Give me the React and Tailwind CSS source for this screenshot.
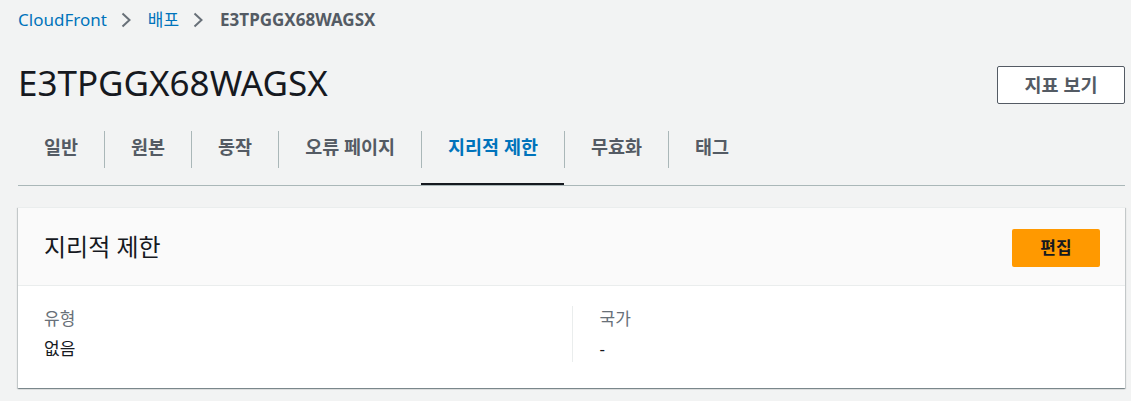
import React from 'react';

const tabs = ['일반', '원본', '동작', '오류 페이지', '지리적 제한', '무효화', '태그'];
const activeTab = '지리적 제한';

function Chevron() {
  return (
    <svg width="16" height="16" viewBox="0 0 16 16" className="ml-[12px] mr-[13px] shrink-0" fill="none">
      <polyline points="3.5,1.5 10.5,8 3.5,14.5" stroke="#687078" strokeWidth="2" strokeLinejoin="miter" />
    </svg>
  );
}

export default function App() {
  return (
    <div
      className="min-h-[401px] w-[1131px] bg-[#f2f3f3] pl-[18px] pr-[6px] text-[#16191f]"
      style={{ fontFamily: '"Noto Sans", "Noto Sans CJK KR", sans-serif' }}
    >
      {/* Breadcrumb */}
      <nav className="flex items-center pt-[8px] text-[17px] leading-[24px]">
        <a className="text-[#0073bb]">CloudFront</a>
        <Chevron />
        <a className="text-[#0073bb]">배포</a>
        <Chevron />
        <span className="font-bold text-[#545b64]">E3TPGGX68WAGSX</span>
      </nav>

      {/* Header */}
      <div className="mt-[30px] flex items-start justify-between">
        <h1 className="text-[35px] leading-[42px] font-normal text-[#16191f]">E3TPGGX68WAGSX</h1>
        <button className="mt-[4px] h-[38px] w-[128px] rounded-[2px] border border-[#545b64] bg-white text-[18.5px] font-bold text-[#545b64]">
          지표 보기
        </button>
      </div>

      {/* Tabs */}
      <div className="mt-[16px] flex border-b border-[#aab7b8]">
        {tabs.map((t, i) => {
          const active = t === activeTab;
          return (
            <div key={t} className="relative h-[65px] pt-[11px]">
              <div
                className={`flex h-[37px] items-center px-[26px] pb-[5px] text-[18.5px] font-bold ${
                  i === 0 ? '' : 'border-l border-[#aab7b8]'
                } ${active ? 'text-[#0073bb]' : 'text-[#545b64]'}`}
              >
                {t}
              </div>
              {active && <div className="absolute bottom-0 left-0 right-0 h-[2px] bg-[#16191f]" />}
            </div>
          );
        })}
      </div>

      {/* Card */}
      <div className="mt-[21px] bg-white shadow-[0_1px_1px_0_rgba(0,28,36,0.3),1px_1px_1px_0_rgba(0,28,36,0.15),-1px_1px_1px_0_rgba(0,28,36,0.15)] border-t border-[#eaeded]">
        <div className="flex h-[78px] items-center justify-between border-b border-[#eaeded] bg-[#fafafa] pl-[26px] pr-[25px]">
          <h2 className="text-[24px] leading-[30px] font-normal text-[#16191f]">지리적 제한</h2>
          <button className="mt-[2px] h-[38px] w-[88px] rounded-[2px] bg-[#ff9900] text-[17px] font-bold text-[#16191f]">
            편집
          </button>
        </div>
        <div className="grid grid-cols-2 px-[26px] pt-[20px] pb-[26px]">
          <div className="flex flex-col gap-[4px]">
            <div className="text-[17px] leading-[26px] text-[#687078]">유형</div>
            <div className="text-[17px] leading-[26px] text-[#16191f]">없음</div>
          </div>
          <div className="flex flex-col gap-[4px] border-l border-[#eaeded] pl-[27px]">
            <div className="text-[17px] leading-[26px] text-[#687078]">국가</div>
            <div className="text-[17px] leading-[26px] text-[#16191f]">-</div>
          </div>
        </div>
      </div>
    </div>
  );
}
